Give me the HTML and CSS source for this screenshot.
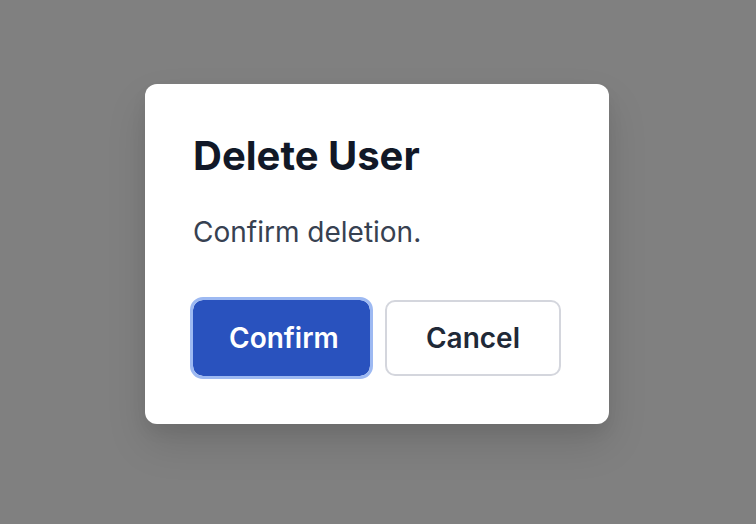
FILE: index.html
```html
<!DOCTYPE html>
<html lang="en">
<head>
<meta charset="utf-8">
<title>Delete User</title>
<link rel="stylesheet" href="styles.css">
</head>
<body>
<div class="overlay">
  <div class="dialog" role="dialog" aria-labelledby="dlg-title">
    <h2 class="dialog-title" id="dlg-title">Delete User</h2>
    <p class="dialog-text">Confirm deletion.</p>
    <div class="dialog-actions">
      <button class="btn btn-primary">Confirm</button>
      <button class="btn btn-secondary">Cancel</button>
    </div>
  </div>
</div>
</body>
</html>
```

FILE: styles.css
```css
* { box-sizing: border-box; }
html, body { margin: 0; height: 100%; }
body {
  font-family: Inter, "Noto Sans", sans-serif;
  background: #808080;
}
.overlay {
  width: 756px;
  height: 524px;
  padding: 0 2px 16px 0;
  display: flex;
  align-items: center;
  justify-content: center;
}
.dialog {
  width: 464px;
  height: 340px;
  background: #ffffff;
  border-radius: 12px;
  padding: 48px;
  box-shadow: 0 20px 40px rgba(0,0,0,0.12), 0 8px 16px rgba(0,0,0,0.06);
}
.dialog-title {
  margin: 0;
  font-size: 40px;
  font-weight: 700;
  line-height: 48px;
  color: #111827;
}
.dialog-text {
  margin: 32px 0 0;
  font-size: 28px;
  line-height: 40px;
  color: #374151;
}
.dialog-actions {
  margin-top: 48px;
  display: flex;
  gap: 15px;
}
.btn {
  height: 76px;
  min-width: 176px;
  padding: 0 36px;
  border-radius: 10px;
  font-family: inherit;
  font-size: 28px;
  font-weight: 600;
  cursor: pointer;
}
.btn-primary {
  background: #2952be;
  color: #ffffff;
  border: none;
  outline: 3px solid #9db9f2;
  outline-offset: 0;
}
.btn-secondary {
  background: #ffffff;
  color: #1f2937;
  border: 2px solid #d4d6dd;
}
```
